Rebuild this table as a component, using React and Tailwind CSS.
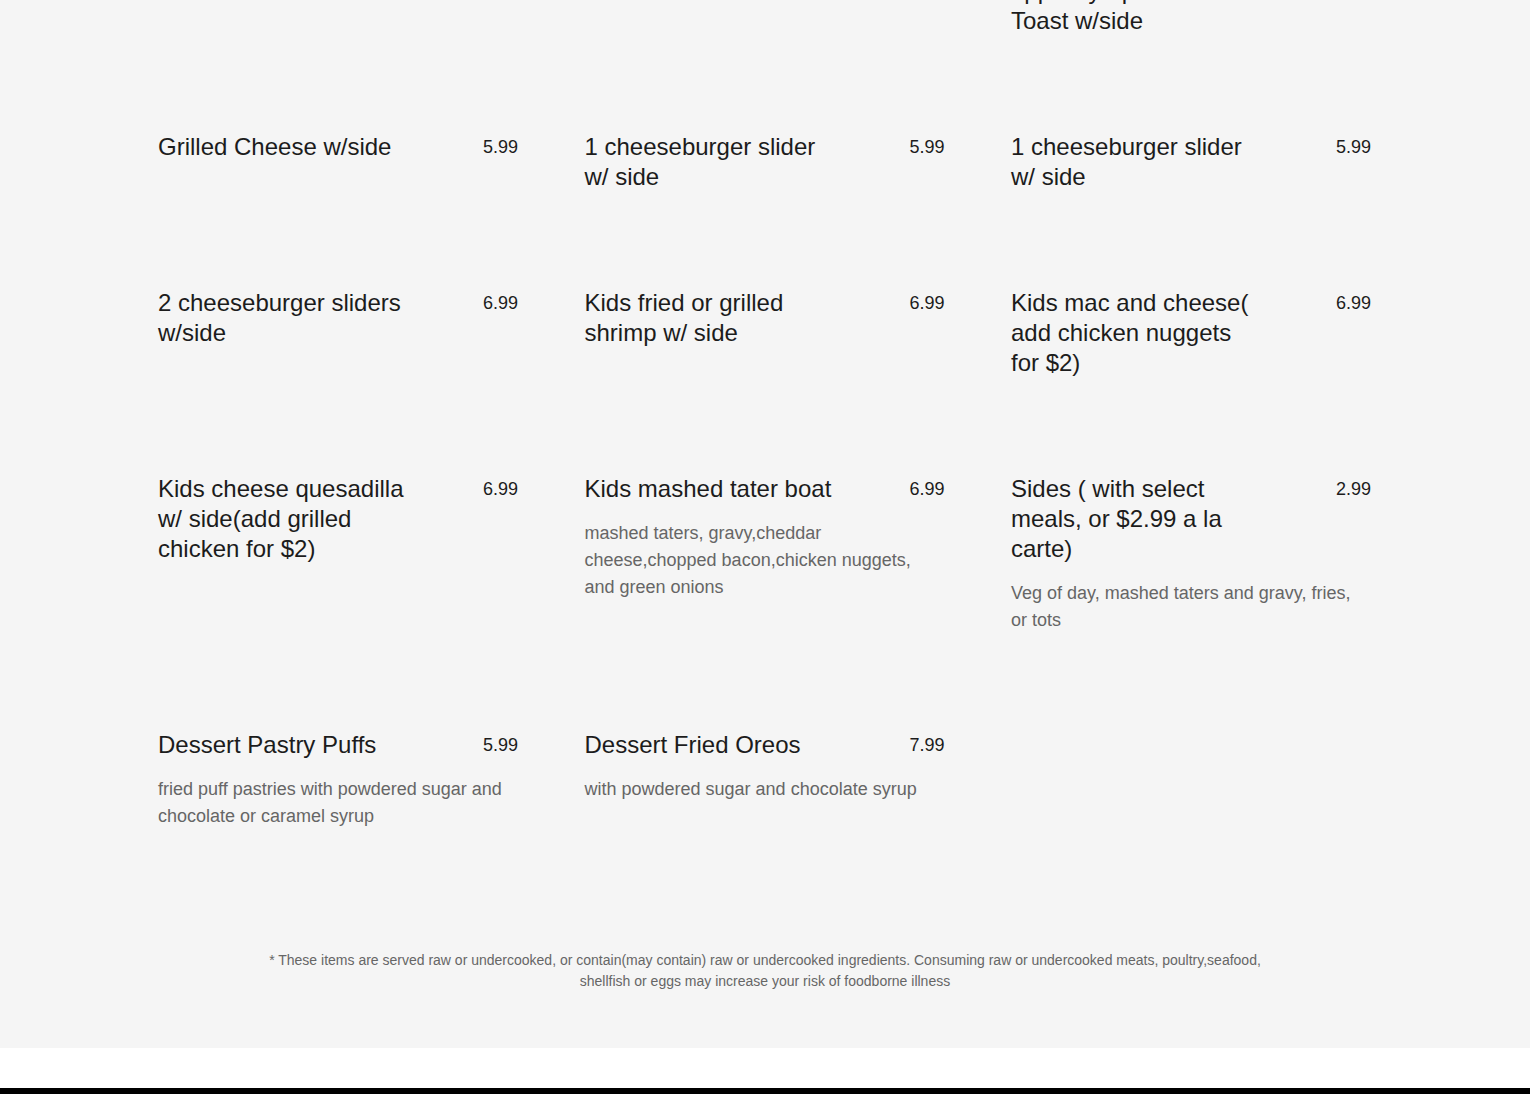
const ROWS = [
  [
    { name: 'Kids Chicken Tenders w/side', price: '6.99' },
    { name: 'Kids Pancakes w/side', price: '5.99' },
    { name: 'Kids Strawberry or apple syrup French Toast w/side', price: '5.99' },
  ],
  [
    { name: 'Grilled Cheese w/side', price: '5.99' },
    { name: '1 cheeseburger slider w/ side', price: '5.99' },
    { name: '1 cheeseburger slider w/ side', price: '5.99' },
  ],
  [
    { name: '2 cheeseburger sliders w/side', price: '6.99' },
    { name: 'Kids fried or grilled shrimp w/ side', price: '6.99' },
    { name: 'Kids mac and cheese( add chicken nuggets for $2)', price: '6.99' },
  ],
  [
    { name: 'Kids cheese quesadilla w/ side(add grilled chicken for $2)', price: '6.99' },
    {
      name: 'Kids mashed tater boat',
      price: '6.99',
      desc: 'mashed taters, gravy,cheddar cheese,chopped bacon,chicken nuggets, and green onions',
    },
    {
      name: 'Sides ( with select meals, or $2.99 a la carte)',
      price: '2.99',
      desc: 'Veg of day, mashed taters and gravy, fries, or tots',
    },
  ],
  [
    {
      name: 'Dessert Pastry Puffs',
      price: '5.99',
      desc: 'fried puff pastries with powdered sugar and chocolate or caramel syrup',
    },
    {
      name: 'Dessert Fried Oreos',
      price: '7.99',
      desc: 'with powdered sugar and chocolate syrup',
    },
  ],
];

function MenuItem({ item }) {
  return (
    <div className="w-[360px]">
      <div className="flex items-start justify-between">
        <h3 className="w-[252px] text-[24px] leading-[30px] text-[#1c1c1c]">{item.name}</h3>
        <span className="text-[18px] leading-[30px] text-[#1c1c1c]">{item.price}</span>
      </div>
      {item.desc && (
        <p className="mt-4 text-[18px] leading-[27px] text-[#666]">{item.desc}</p>
      )}
    </div>
  );
}

export default function App() {
  const items = ROWS.flat();

  return (
    <div className="bg-white" style={{ fontFamily: '"Liberation Sans", Arial, sans-serif' }}>
      <section className="bg-[#f5f5f5] pb-[56px]">
        <div className="mx-auto -mt-[54px] grid w-[1214px] grid-cols-[360px_360px_360px] gap-x-[66.5px] gap-y-24">
          {items.map((item, i) => (
            <MenuItem key={i} item={item} />
          ))}
        </div>
        <p className="mx-auto mt-[120px] max-w-[1000px] text-center text-[14px] leading-[21px] text-[#666]">
          * These items are served raw or undercooked, or contain(may contain) raw or undercooked ingredients. Consuming raw or undercooked meats, poultry,seafood, shellfish or eggs may increase your risk of foodborne illness
        </p>
      </section>
      <div className="h-10 bg-white" />
      <footer className="h-[6px] bg-black" />
    </div>
  );
}
